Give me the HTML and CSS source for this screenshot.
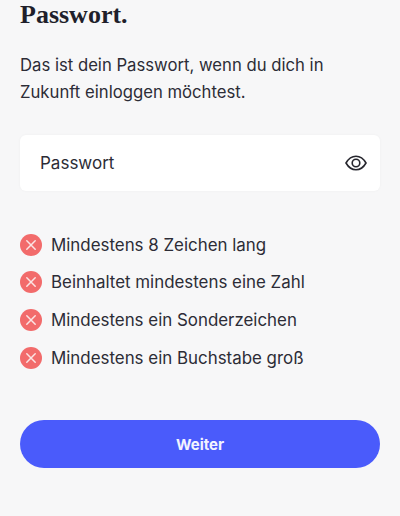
FILE: index.html
```html
<!DOCTYPE html>
<html lang="de">
<head>
    <meta charset="UTF-8">
    <meta name="viewport" content="width=device-width, initial-scale=1.0">
    <title>Passwort</title>
    <link rel="stylesheet" href="styles.css">
</head>
<body>
    <h1 class="title">Passwort.</h1>
    <p class="intro">Das ist dein Passwort, wenn du dich in Zukunft einloggen möchtest.</p>

    <div class="field">
        <span class="field-label">Passwort</span>
        <svg class="eye" width="22" height="16" viewBox="0 0 22 16" fill="none" stroke="#26262e" stroke-width="1.6">
            <path d="M1 8C3.5 3.6 7 1.2 11 1.2S18.5 3.6 21 8C18.5 12.4 15 14.8 11 14.8S3.5 12.4 1 8Z"/>
            <circle cx="11" cy="8" r="3.8"/>
        </svg>
    </div>

    <ul class="rules">
        <li class="rule">
            <svg class="cross" width="22" height="22" viewBox="0 0 22 22">
                <circle cx="11" cy="11" r="11" fill="#f26b6b"/>
                <path d="M6.8 6.8L15.2 15.2M15.2 6.8L6.8 15.2" stroke="#fbe4e4" stroke-width="1.5" stroke-linecap="round"/>
            </svg>
            Mindestens 8 Zeichen lang
        </li>
        <li class="rule">
            <svg class="cross" width="22" height="22" viewBox="0 0 22 22">
                <circle cx="11" cy="11" r="11" fill="#f26b6b"/>
                <path d="M6.8 6.8L15.2 15.2M15.2 6.8L6.8 15.2" stroke="#fbe4e4" stroke-width="1.5" stroke-linecap="round"/>
            </svg>
            Beinhaltet mindestens eine Zahl
        </li>
        <li class="rule">
            <svg class="cross" width="22" height="22" viewBox="0 0 22 22">
                <circle cx="11" cy="11" r="11" fill="#f26b6b"/>
                <path d="M6.8 6.8L15.2 15.2M15.2 6.8L6.8 15.2" stroke="#fbe4e4" stroke-width="1.5" stroke-linecap="round"/>
            </svg>
            Mindestens ein Sonderzeichen
        </li>
        <li class="rule">
            <svg class="cross" width="22" height="22" viewBox="0 0 22 22">
                <circle cx="11" cy="11" r="11" fill="#f26b6b"/>
                <path d="M6.8 6.8L15.2 15.2M15.2 6.8L6.8 15.2" stroke="#fbe4e4" stroke-width="1.5" stroke-linecap="round"/>
            </svg>
            Mindestens ein Buchstabe groß
        </li>
    </ul>

    <button class="next">Weiter</button>
</body>
</html>
```

FILE: styles.css
```css
html {
    height: 100%;
}

body {
    margin: 0;
    padding: 0 20px;
    height: 516px;
    box-sizing: border-box;
    overflow: hidden;
    background-color: #f7f7f8;
    color: #2c2c36;
    font-family: Inter, 'Noto Sans', sans-serif;
}

.title {
    margin: 0;
    padding-top: 1px;
    font-family: 'Liberation Serif', serif;
    font-size: 26px;
    line-height: 28px;
    font-weight: 700;
    color: #1f1f2b;
}

.intro {
    margin: 23px 0 0;
    font-size: 16.7px;
    line-height: 27px;
}

.field {
    margin-top: 29px;
    height: 56px;
    padding: 0 13px 0 20px;
    display: flex;
    align-items: center;
    justify-content: space-between;
    background-color: #fff;
    border-radius: 6px;
    box-shadow: 0 0 3px rgba(0, 0, 0, 0.04);
}

.field-label {
    font-size: 17px;
}

.rules {
    list-style: none;
    margin: 41px 0 0;
    padding: 0;
    display: flex;
    flex-direction: column;
    gap: 12.7px;
}

.rule {
    display: flex;
    align-items: center;
    gap: 9px;
    height: 25px;
    font-size: 16.9px;
}

.next {
    display: block;
    width: 100%;
    height: 48px;
    margin-top: 50px;
    border: none;
    border-radius: 24px;
    background-color: #4a5bfb;
    color: #f2f3ff;
    font-family: Inter, sans-serif;
    font-size: 15px;
    font-weight: 700;
}
```
